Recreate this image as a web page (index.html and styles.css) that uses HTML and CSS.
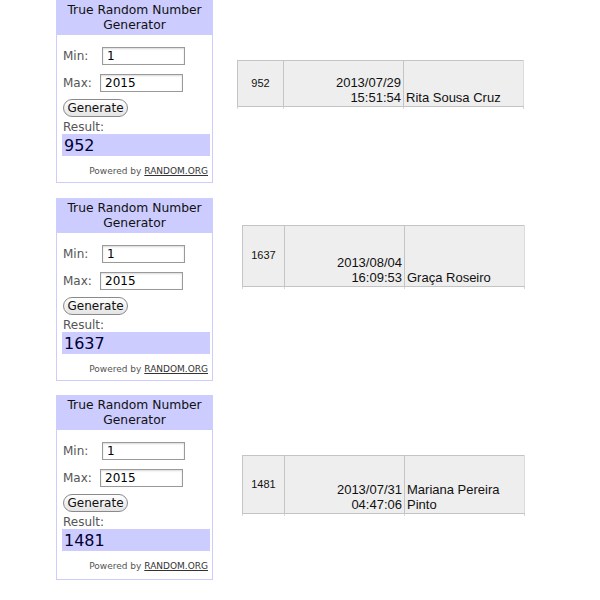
FILE: index.html
```html
<!DOCTYPE html>
<html lang="pt-PT">
<head>
  <meta charset="UTF-8">
  <title>Sorteio</title>
  <link rel="stylesheet" href="styles.css">
</head>
<body>
<div class="page">

  <!-- Sorteio 1 -->
  <div class="entry">
    <div class="widget">
      <div class="widget-head">True Random Number<br>Generator</div>
      <div class="widget-body">
        <div class="field field-min">
          <label>Min:</label>
          <input type="text" value="1">
        </div>
        <div class="field field-max">
          <label>Max:</label>
          <input type="text" value="2015">
        </div>
        <button class="gen-button">Generate</button>
        <div class="result-label">Result:</div>
        <div class="result">952</div>
        <div class="powered">Powered by <a href="#">RANDOM.ORG</a></div>
      </div>
    </div>
    <table class="draw draw-first">
      <tr class="row-short">
        <td class="num">952</td>
        <td class="date">2013/07/29<br>15:51:54</td>
        <td class="name">Rita Sousa Cruz</td>
      </tr>
      <tr class="stub"><td></td><td></td><td></td></tr>
    </table>
  </div>

  <!-- Sorteio 2 -->
  <div class="entry">
    <div class="widget">
      <div class="widget-head">True Random Number<br>Generator</div>
      <div class="widget-body">
        <div class="field field-min">
          <label>Min:</label>
          <input type="text" value="1">
        </div>
        <div class="field field-max">
          <label>Max:</label>
          <input type="text" value="2015">
        </div>
        <button class="gen-button">Generate</button>
        <div class="result-label">Result:</div>
        <div class="result">1637</div>
        <div class="powered">Powered by <a href="#">RANDOM.ORG</a></div>
      </div>
    </div>
    <table class="draw draw-second">
      <tr class="row-tall">
        <td class="num">1637</td>
        <td class="date">2013/08/04<br>16:09:53</td>
        <td class="name">Graça Roseiro</td>
      </tr>
      <tr class="stub"><td></td><td></td><td></td></tr>
    </table>
  </div>

  <!-- Sorteio 3 -->
  <div class="entry entry-last">
    <div class="widget">
      <div class="widget-head">True Random Number<br>Generator</div>
      <div class="widget-body">
        <div class="field field-min">
          <label>Min:</label>
          <input type="text" value="1">
        </div>
        <div class="field field-max">
          <label>Max:</label>
          <input type="text" value="2015">
        </div>
        <button class="gen-button">Generate</button>
        <div class="result-label">Result:</div>
        <div class="result">1481</div>
        <div class="powered">Powered by <a href="#">RANDOM.ORG</a></div>
      </div>
    </div>
    <table class="draw draw-third">
      <tr class="row-mid">
        <td class="num">1481</td>
        <td class="date">2013/07/31<br>04:47:06</td>
        <td class="name">Mariana Pereira Pinto</td>
      </tr>
      <tr class="stub"><td></td><td></td><td></td></tr>
    </table>
  </div>

</div>
</body>
</html>
```

FILE: styles.css
```css
body {
  margin: 0;
  background: #fff;
  font-family: "DejaVu Sans", Verdana, sans-serif;
  color: #000;
}
.page {
  padding-left: 56px;
  display: flex;
  flex-direction: column;
  gap: 15px;
}
.entry {
  display: flex;
  align-items: flex-start;
}
.entry-last {
  margin-top: -1px;
}

/* widget random.org */
.widget {
  width: 155px;
  border: 1px solid #ccccff;
  background: #fff;
}
.widget-head {
  background: #ccccff;
  text-align: center;
  font-size: 12.3px;
  line-height: 15px;
  padding: 2px 0 2px;
  color: #111;
}
.widget-body {
  padding: 0 3px 0 6px;
}
.field {
  display: flex;
  align-items: center;
}
.field-min {
  margin-top: 12px;
}
.field-max {
  margin-top: 9px;
}
.field label {
  width: 39px;
  font-size: 12px;
  color: #555;
}
.field-max label {
  width: 37px;
}
.field input {
  width: 83px;
  height: 18px;
  box-sizing: border-box;
  border: 1px solid #9a9a9a;
  box-shadow: inset 0 1px 2px rgba(0, 0, 0, 0.15);
  padding: 0 4px;
  font-family: "DejaVu Sans", Verdana, sans-serif;
  font-size: 12px;
  color: #000;
  background: #fff;
}
.gen-button {
  display: block;
  margin-top: 7px;
  height: 18px;
  width: 65px;
  padding: 0;
  border: 1px solid #8a8a8a;
  border-radius: 9px;
  background: linear-gradient(#ffffff, #e4e4e4);
  font-family: "DejaVu Sans", Verdana, sans-serif;
  font-size: 12px;
  line-height: 16px;
  color: #111;
}
.result-label {
  margin-top: 3px;
  font-size: 12px;
  line-height: 14px;
  color: #555;
}
.result {
  margin-left: -1px;
  width: 146px;
  height: 22px;
  padding-left: 2px;
  background: #ccccff;
  font-size: 16px;
  line-height: 23px;
  color: #000033;
}
.powered {
  text-align: right;
  font-size: 9px;
  line-height: 11px;
  padding: 10px 1px 5px 0;
  color: #555;
}
.powered a {
  color: #333;
}
.entry-last .powered {
  padding-bottom: 7px;
}

/* tabela do sorteio */
.draw {
  border-collapse: collapse;
  font-family: "Liberation Sans", Arial, sans-serif;
  font-size: 13px;
}
.draw-first {
  margin-top: 60px;
  margin-left: 24px;
}
.draw-second {
  margin-top: 27px;
  margin-left: 29px;
}
.draw-third {
  margin-top: 60px;
  margin-left: 29px;
}
.draw td {
  background: #eeeeee;
  border: 1px solid #c4c4c4;
  padding: 0 2px 1px;
  line-height: 15px;
  color: #111;
}
.draw .num {
  width: 41px;
  text-align: center;
  vertical-align: middle;
  font-size: 11px;
}
.draw-second .num,
.draw-third .num {
  width: 37px;
}
.draw .date {
  width: 115px;
  text-align: right;
  vertical-align: bottom;
}
.draw .name {
  width: 115px;
  text-align: left;
  vertical-align: bottom;
  border-right-color: #dcdcdc;
}
.row-short td {
  height: 44px;
}
.row-tall td {
  height: 59px;
}
.row-mid td {
  height: 56px;
}
.draw .stub td {
  height: 2px;
  padding: 0;
  background: #fff;
  border-bottom: none;
  border-color: #d8d8d8;
}
```
